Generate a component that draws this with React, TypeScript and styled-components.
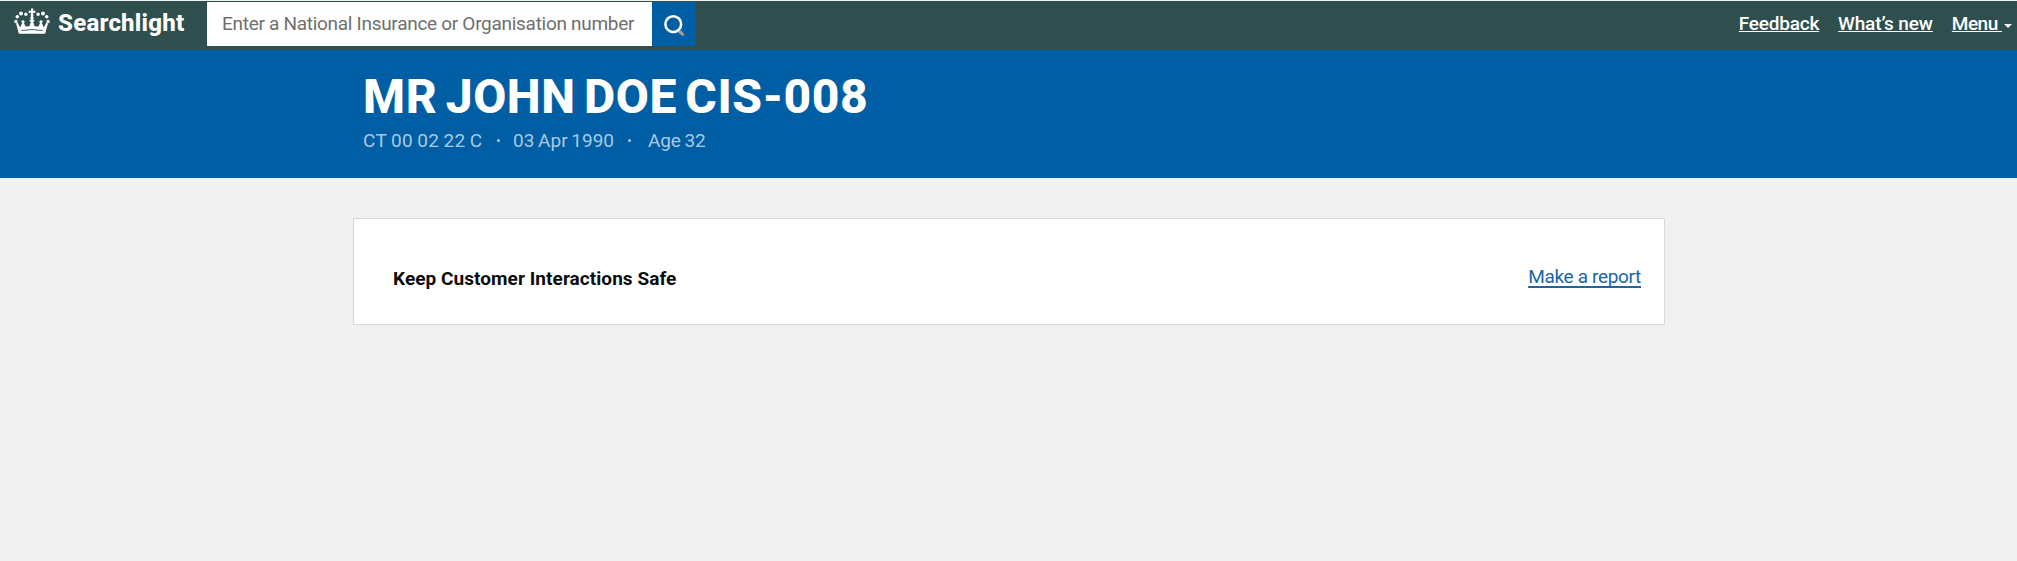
import React from 'react';
import styled, { createGlobalStyle } from 'styled-components';

const GlobalStyle = createGlobalStyle`
  *, *::before, *::after { box-sizing: border-box; }
  html { background: #f0f0f0; }
  body {
    margin: 0;
    background: #f0f0f0;
    font-family: Roboto, "Liberation Sans", Arial, sans-serif;
    font-size: 19px;
    line-height: 25px;
    overflow-x: hidden;
  }
`;

const Page = styled.div`
  min-height: 561px;
`;

const TopBar = styled.header`
  display: flex;
  height: 50px;
  border-top: 1px solid #eef4f2;
  background: #2f4f4f;
`;

const Brand = styled.a`
  display: flex;
  align-items: flex-start;
  width: 207px;
  padding: 7px 0 0 14px;
  color: #fff;
  text-decoration: none;
`;

const BrandName = styled.span`
  margin-left: 8px;
  font-size: 24px;
  font-weight: 800;
  line-height: 30px;
  letter-spacing: 0.24px;
`;

const SearchForm = styled.form`
  display: flex;
  height: 44px;
  margin: 1px 0 0;
`;

const SearchInput = styled.input`
  width: 445px;
  height: 44px;
  padding: 0 15px 1px;
  border: 0;
  border-radius: 0;
  background: #fff;
  font: inherit;
  font-weight: 450;
  letter-spacing: -0.29px;
  color: #6f6f6f;

  &::placeholder {
    color: #6f6f6f;
    opacity: 1;
  }
`;

const SearchButton = styled.button`
  display: flex;
  width: 44px;
  height: 44px;
  padding: 11px;
  border: 0;
  background: #005ea5;
`;

const Nav = styled.nav`
  display: flex;
  align-items: flex-start;
  gap: 19px;
  margin-left: auto;
  padding: 10px 5px 0 0;
`;

const NavLink = styled.a<{ $tracking?: number }>`
  color: #fff;
  font-weight: 480;
  letter-spacing: ${({ $tracking = 0 }) => $tracking}px;
  white-space: pre;
  text-decoration: underline;
  text-decoration-thickness: 1px;
  text-decoration-skip-ink: none;
  text-underline-offset: 1px;
`;

const MenuGroup = styled.div`
  display: flex;
  align-items: flex-start;
`;

const Caret = styled.span`
  width: 0;
  height: 0;
  margin: 13px 0 0 2px;
  border: 4px solid transparent;
  border-top-color: #fff;
  border-bottom: 0;
`;

const Banner = styled.section`
  height: 128px;
  padding: 22px 0 0 363px;
  background: #005ea5;
`;

const CustomerName = styled.h1`
  margin: 0;
  color: #fff;
  font-size: 48px;
  font-weight: 800;
  line-height: 50px;
  letter-spacing: 0.6px;
  word-spacing: -4.2px;
`;

const Details = styled.div`
  display: flex;
  margin-top: 6px;
  color: #a9c9e2;
  font-weight: 450;
`;

const Detail = styled.span<{ $width: number; $tracking?: number }>`
  width: ${({ $width }) => $width}px;
  letter-spacing: ${({ $tracking = 0 }) => $tracking}px;
  word-spacing: -1px;
  white-space: nowrap;
`;

const Dot = styled.span<{ $gap: number }>`
  width: 3px;
  height: 3px;
  margin: 11px ${({ $gap }) => $gap}px 0 0;
  border-radius: 50%;
  background: currentColor;
`;

const Card = styled.main`
  display: flex;
  justify-content: space-between;
  align-items: flex-start;
  width: 1312px;
  height: 107px;
  margin: 40px 0 0 353px;
  padding: 45px 23px 0 39px;
  border: 1px solid #d8d8d8;
  background: #fff;
`;

const CardTitle = styled.h2`
  margin: 2px 0 0;
  color: #0b0c0c;
  font-size: 19px;
  font-weight: 700;
  line-height: 25px;
  letter-spacing: 0.06px;
`;

const ReportLink = styled.a`
  color: #1b65a6;
  letter-spacing: -0.33px;
  text-decoration: underline;
  text-decoration-thickness: 1.5px;
  text-decoration-skip-ink: none;
  text-underline-offset: 3px;
`;

const Crown = () => (
  <svg width="36" height="27" viewBox="0 0 36 27" fill="#fff" aria-hidden="true">
    <path d="M17 .5h2.4l-.4 2.4 2.3-.4v2.6L19 4.700l.5 3.500-1.500 1-1.500-1 .5-3.500-2.300.4V2.500l2.300.4z" />
    <circle cx="18" cy="10.200" r="1.700" />
    <circle cx="11.900" cy="6.200" r="1.700" />
    <circle cx="24.100" cy="6.200" r="1.700" />
    <circle cx="7" cy="5.500" r="1.900" />
    <circle cx="29" cy="5.500" r="1.900" />
    <circle cx="3.300" cy="8.800" r="1.800" />
    <circle cx="32.700" cy="8.800" r="1.800" />
    <circle cx="1.900" cy="13.500" r="1.700" />
    <circle cx="34.100" cy="13.500" r="1.700" />
    <path d="M2 15.500l1.800-.7 2.300 4.700 2.200-4.700-1.200-1.500 2-1.200 1.600 1.400-.6 2 1.600 3 3.700-.2 1.400-4-1.500-1.500 2.700-1.800 2.700 1.800-1.500 1.500 1.400 4 3.700.2 1.600-3-.6-2 1.600-1.400 2 1.200-1.200 1.500 2.200 4.700 2.300-4.700 1.800.7-2.900 10.300H4.900z" />
    <path d="M7.500 22.500q10.500-1.900 21 0" fill="none" stroke="#2f4f4f" strokeWidth=".9" />
  </svg>
);

const Magnifier = () => (
  <svg width="24" height="24" viewBox="0 0 24 24" fill="none" aria-hidden="true">
    <path d="M16 18h4l4 5.500h-3.500L15 19z" fill="#a3a09c" />
    <circle cx="11.200" cy="11" r="8.600" stroke="#fff" strokeWidth="2.800" />
  </svg>
);

export default function App() {
  return (
    <Page>
      <GlobalStyle />
      <TopBar>
        <Brand href="#">
          <Crown />
          <BrandName>Searchlight</BrandName>
        </Brand>
        <SearchForm>
          <SearchInput placeholder="Enter a National Insurance or Organisation number" />
          <SearchButton type="button" aria-label="Search">
            <Magnifier />
          </SearchButton>
        </SearchForm>
        <Nav>
          <NavLink href="#" $tracking={-0.23}>Feedback</NavLink>
          <NavLink href="#" $tracking={-0.12}>What’s new</NavLink>
          <MenuGroup>
            <NavLink href="#" $tracking={-0.5}>{'Menu '}</NavLink>
            <Caret />
          </MenuGroup>
        </Nav>
      </TopBar>
      <Banner>
        <CustomerName>MR JOHN DOE CIS-008</CustomerName>
        <Details>
          <Detail $width={134} $tracking={0.4}>CT 00 02 22 C</Detail>
          <Dot $gap={13} />
          <Detail $width={115} $tracking={0}>03 Apr 1990</Detail>
          <Dot $gap={17} />
          <Detail $width={70} $tracking={-0.1}>Age 32</Detail>
        </Details>
      </Banner>
      <Card>
        <CardTitle>Keep Customer Interactions Safe</CardTitle>
        <ReportLink href="#">Make a report</ReportLink>
      </Card>
    </Page>
  );
}
